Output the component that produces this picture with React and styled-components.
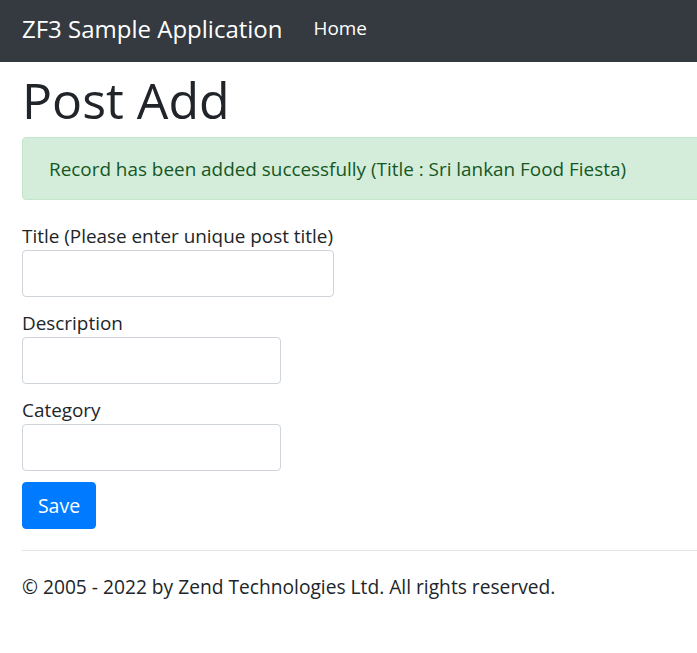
import React from 'react';
import styled, { createGlobalStyle } from 'styled-components';

const GlobalStyle = createGlobalStyle`
  html, body {
    margin: 0;
    padding: 0;
    overflow-x: hidden;
    background: #fff;
  }
  body {
    font-family: "Open Sans", "Noto Sans", sans-serif;
    font-size: 18.9px;
    line-height: 1.5;
    color: #212529;
  }
  *, *::before, *::after {
    box-sizing: border-box;
  }
`;

const Navbar = styled.nav`
  height: 62px;
  background: #343a40;
  display: flex;
  align-items: center;
  padding: 0 22px;
  gap: 31px;
`;

const Brand = styled.a`
  color: #fff;
  font-size: 24px;
  line-height: 1;
  margin-top: -5px;
  text-decoration: none;
  white-space: nowrap;
`;

const NavLink = styled.a`
  color: #fff;
  font-size: 18.9px;
  line-height: 1;
  margin-top: -5px;
  text-decoration: none;
`;

const Container = styled.main`
  width: 760px;
  padding-left: 22px;
`;

const Title = styled.h1`
  margin: 8px 0 7px;
  font-size: 50px;
  font-weight: 500;
  line-height: 60px;
`;

const Alert = styled.div`
  height: 63px;
  display: flex;
  align-items: center;
  padding: 1px 26px 0;
  background: #d4edda;
  border: 1px solid #c3e6cb;
  border-radius: 4px;
  color: #155724;
`;

const Form = styled.form`
  margin-top: 22px;
  display: flex;
  flex-direction: column;
`;

const Group = styled.div`
  display: flex;
  flex-direction: column;
  margin-bottom: 12px;
`;

const Label = styled.label`
  line-height: 28px;
`;

const Input = styled.input`
  width: ${(p) => p.$width}px;
  height: 47px;
  border: 1px solid #ced4da;
  border-radius: 4px;
  padding: 6px 13px;
  font: inherit;
  color: #495057;
  background: #fff;
`;

const Button = styled.button`
  align-self: flex-start;
  height: 47px;
  width: 74px;
  padding: 0;
  margin-top: -1px;
  border: 1px solid #007bff;
  border-radius: 4px;
  background: #007bff;
  color: #fff;
  font: inherit;
  font-size: 19.5px;
`;

const Rule = styled.hr`
  margin: 21px 0 0;
  border: 0;
  border-top: 1px solid #e5e5e5;
`;

const Footer = styled.footer`
  padding-top: 22px;
  line-height: 28px;
  font-size: 19.2px;
`;

export default function App() {
  return (
    <>
      <GlobalStyle />
      <Navbar>
        <Brand href="#">ZF3 Sample Application</Brand>
        <NavLink href="#">Home</NavLink>
      </Navbar>
      <Container>
        <Title>Post Add</Title>
        <Alert>Record has been added successfully (Title : Sri lankan Food Fiesta)</Alert>
        <Form onSubmit={(e) => e.preventDefault()}>
          <Group>
            <Label>Title (Please enter unique post title)</Label>
            <Input $width={312} />
          </Group>
          <Group>
            <Label>Description</Label>
            <Input $width={259} />
          </Group>
          <Group>
            <Label>Category</Label>
            <Input $width={259} />
          </Group>
          <Button type="submit">Save</Button>
        </Form>
        <Rule />
        <Footer>© 2005 - 2022 by Zend Technologies Ltd. All rights reserved.</Footer>
      </Container>
    </>
  );
}
